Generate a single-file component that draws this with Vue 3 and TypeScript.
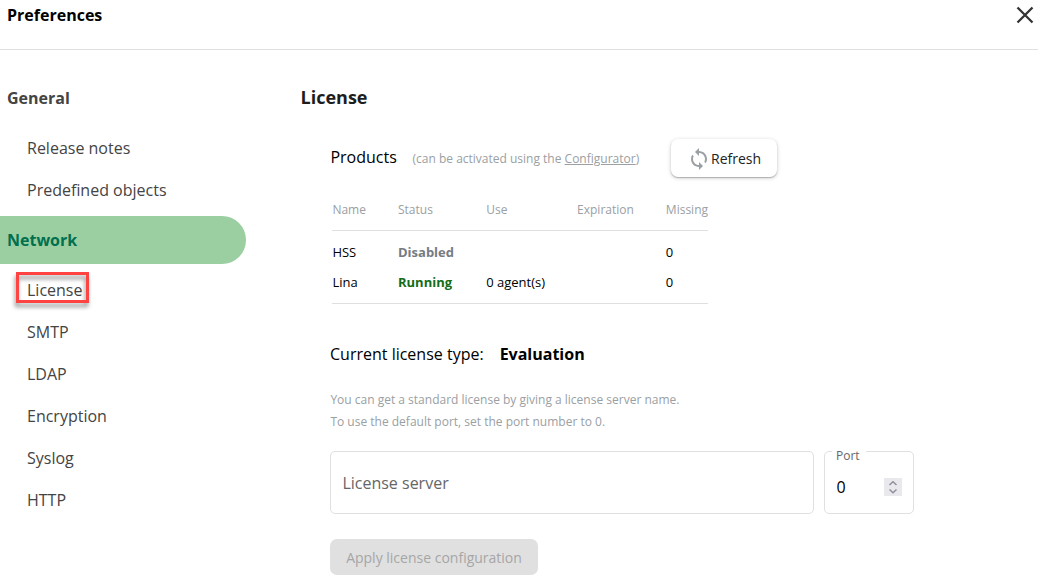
<script setup lang="ts">
import { ref } from 'vue'

interface MenuGroup {
  title: string
  items: string[]
}

interface Product {
  name: string
  status: 'Disabled' | 'Running'
  use: string
  expiration: string
  missing: number
}

const groups: MenuGroup[] = [
  { title: 'General', items: ['Release notes', 'Predefined objects'] },
  { title: 'Network', items: ['License', 'SMTP', 'LDAP', 'Encryption', 'Syslog', 'HTTP'] },
]
const activeGroup = ref('Network')
const markedItem = ref('License')

const products: Product[] = [
  { name: 'HSS', status: 'Disabled', use: '', expiration: '', missing: 0 },
  { name: 'Lina', status: 'Running', use: '0 agent(s)', expiration: '', missing: 0 },
]
const port = ref(0)
</script>

<template>
  <div class="page">
    <header class="header">
      <span class="title">Preferences</span>
      <button class="close" aria-label="Close">
        <svg width="18" height="18" viewBox="0 0 18 18">
          <path d="M1.5 1.5 16.5 16.5M16.5 1.5 1.5 16.5" stroke="#333" stroke-width="2.3" fill="none" />
        </svg>
      </button>
    </header>

    <div class="body">
      <nav class="side">
        <section v-for="group in groups" :key="group.title">
          <div class="group" :class="{ active: group.title === activeGroup }">{{ group.title }}</div>
          <ul class="items">
            <li v-for="item in group.items" :key="item" class="item">
              {{ item }}
              <span v-if="item === markedItem" class="marker"></span>
            </li>
          </ul>
        </section>
      </nav>

      <main class="main">
        <h1 class="heading">License</h1>
        <div class="products">
          <span class="label">Products</span>
          <span class="hint">(can be activated using the <a class="link">Configurator</a>)</span>
          <button class="refresh">
            <svg class="sync" width="24" height="24" viewBox="0 0 24 24">
              <path
                fill="#9aa0a3"
                d="M12 4V1L8 5l4 4V6c3.31 0 6 2.69 6 6 0 1.01-.25 1.97-.7 2.8l1.46 1.46C19.54 15.03 20 13.57 20 12c0-4.42-3.58-8-8-8zm0 14c-3.31 0-6-2.69-6-6 0-1.01.25-1.97.7-2.8L5.24 7.74C4.46 8.97 4 10.43 4 12c0 4.42 3.58 8 8 8v3l4-4-4-4v3z"
              />
            </svg>
            <span>Refresh</span>
          </button>
        </div>

        <div class="table">
          <div class="row head">
            <span>Name</span><span>Status</span><span>Use</span><span>Expiration</span><span>Missing</span>
          </div>
          <div class="rows">
            <div v-for="p in products" :key="p.name" class="row">
              <span>{{ p.name }}</span>
              <span class="status" :class="p.status.toLowerCase()">{{ p.status }}</span>
              <span>{{ p.use }}</span>
              <span>{{ p.expiration }}</span>
              <span>{{ p.missing }}</span>
            </div>
          </div>
        </div>

        <div class="type"><span>Current license type:</span><strong>Evaluation</strong></div>

        <p class="help">
          You can get a standard license by giving a license server name.<br />
          To use the default port, set the port number to 0.
        </p>

        <div class="fields">
          <div class="field server">License server</div>
          <div class="field port">
            <span class="legend">Port</span>
            <span class="value">{{ port }}</span>
            <span class="spin">
              <svg width="18" height="18" viewBox="0 0 18 18">
                <path d="M5.5 7 9 3.7 12.5 7M5.5 11.5 9 14.8 12.5 11.5" stroke="#8f8f9d" stroke-width="1.5" fill="none" />
              </svg>
            </span>
          </div>
        </div>

        <button class="apply" disabled>Apply license configuration</button>
      </main>
    </div>
  </div>
</template>

<style>
body {
  margin: 0;
  background: #fff;
}
</style>

<style scoped>
.page {
  width: 1038px;
  height: 585px;
  overflow: hidden;
  box-sizing: border-box;
  background: #fff;
  color: #000;
  font-family: 'Open Sans', 'Noto Sans', sans-serif;
  font-size: 16px;
}
.page * {
  box-sizing: border-box;
}
button {
  font-family: inherit;
  border: 0;
  padding: 0;
  margin: 0;
}
.header {
  height: 50px;
  border-bottom: 1px solid #e0e0e0;
  display: flex;
  justify-content: space-between;
  padding: 0 4px 0 7px;
}
.title {
  font-weight: 700;
  line-height: 30px;
}
.close {
  display: flex;
  height: 18px;
  margin-top: 6px;
  background: none;
}
.body {
  display: flex;
  padding-top: 24px;
}
.side {
  width: 246px;
  color: #444;
}
.group {
  height: 48px;
  line-height: 48px;
  padding-left: 7px;
  font-weight: 700;
}
.group.active {
  background: #9bcea1;
  color: #00704f;
  border-radius: 0 24px 24px 0;
}
.items {
  list-style: none;
  margin: 0;
  padding: 5px 0 5px 27px;
}
.item {
  position: relative;
  height: 42px;
  line-height: 42px;
}
.marker {
  position: absolute;
  left: -11px;
  top: 3px;
  width: 73px;
  height: 31px;
  border: 3px solid #ff4343;
  filter: drop-shadow(-1px 4px 2px rgba(0, 0, 0, 0.42));
}
.main {
  padding-left: 54px;
}
.heading {
  margin: 0;
  padding-left: 0.5px;
  font-size: 18px;
  font-weight: 700;
  line-height: 46px;
  color: #1d1d1d;
}
.products {
  display: flex;
  align-items: center;
  height: 40px;
  margin: 18px 0 0 30px;
}
.label {
  width: 82px;
  padding: 0 0 2px 0.4px;
}
.hint {
  width: 259px;
  padding-left: 0.5px;
  font-size: 12px;
  color: #9aa0a3;
}
.link {
  text-decoration: underline;
}
.refresh {
  display: flex;
  align-items: center;
  width: 106px;
  height: 38px;
  padding-left: 16px;
  border-radius: 7px;
  background: #fff;
  color: #222;
  font-size: 14px;
  box-shadow: 0 1px 4px rgba(0, 0, 0, 0.2), 0 1px 1px rgba(0, 0, 0, 0.22);
}
.sync {
  margin-top: 2px;
}
.table {
  width: 376px;
  margin: 11px 0 0 32px;
  font-size: 13px;
}
.row {
  display: grid;
  grid-template-columns: 65.6px 88.2px 90.9px 88.8px 42.1px;
  padding-left: 0.4px;
  line-height: 30px;
  white-space: nowrap;
}
.row.head {
  height: 42px;
  line-height: 42px;
  font-size: 12px;
  color: #9aa0a3;
  border-bottom: 1px solid #e0e0e0;
}
.rows {
  padding: 6px 0;
  border-bottom: 1px solid #e0e0e0;
}
.status {
  font-weight: 700;
}
.disabled {
  color: #757c82;
}
.running {
  color: #136c18;
}
.type {
  display: flex;
  gap: 16px;
  line-height: 30px;
  margin: 35px 0 0 30px;
}
.help {
  margin: 20px 0 0 30px;
  padding-left: 0.4px;
  font-size: 12px;
  line-height: 22px;
  color: #9aa0a3;
}
.fields {
  display: flex;
  gap: 10px;
  margin: 18px 0 0 30px;
}
.field {
  height: 63px;
  border: 1px solid #e0e0e0;
  border-radius: 5px;
}
.server {
  width: 484px;
  padding-left: 11.4px;
  line-height: 62px;
  color: #666;
}
.port {
  position: relative;
  display: flex;
  align-items: center;
  justify-content: space-between;
  width: 90px;
  padding: 8px 11px 0 11.4px;
}
.legend {
  position: absolute;
  left: 7px;
  top: -6px;
  width: 34px;
  padding-left: 4px;
  background: #fff;
  color: #666;
  font-size: 12px;
  line-height: 20px;
}
.spin {
  display: flex;
  background: #e9e9ed;
}
.apply {
  display: block;
  width: 208px;
  height: 36px;
  margin: 25px 0 0 30px;
  border-radius: 7px;
  background: #e0e0e0;
  color: #a6a6a6;
  font-size: 14px;
}
</style>
